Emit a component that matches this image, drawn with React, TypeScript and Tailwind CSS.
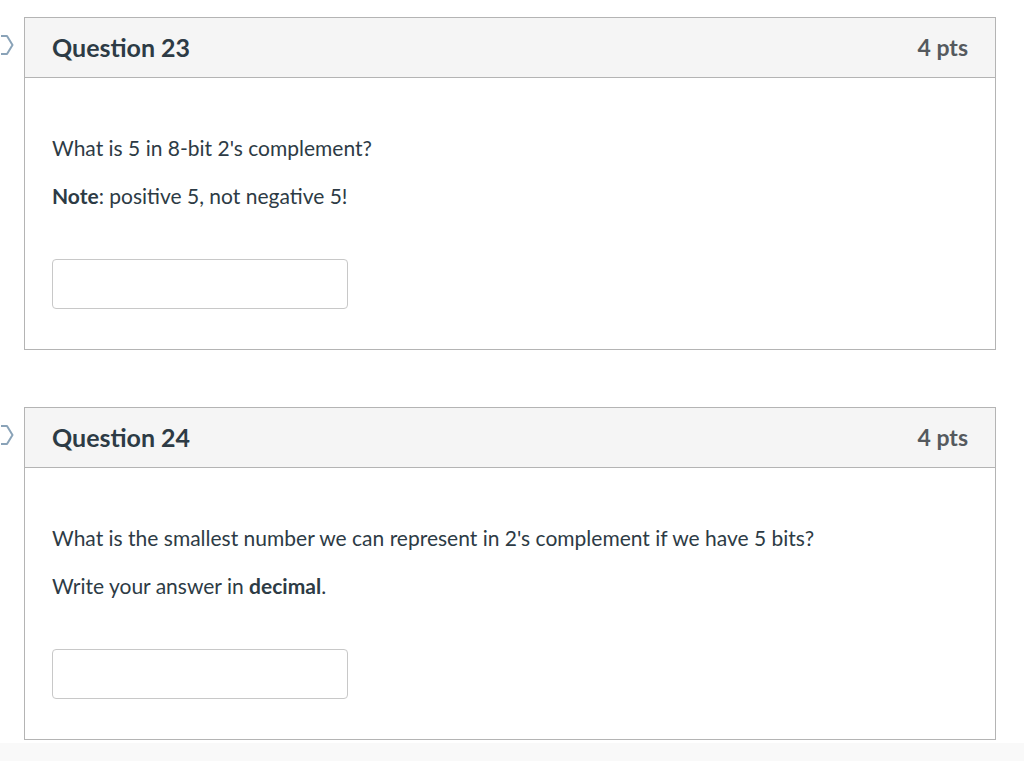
import React from "react";

function Flag() {
  return (
    <svg
      className="absolute left-[-24px] top-[16px]"
      width="14"
      height="22"
      viewBox="0 0 14 22"
    >
      <polyline
        points="-4,2 6,2 11.5,11 6,20 -4,20"
        fill="none"
        stroke="#8aa3b8"
        strokeWidth="2"
        strokeLinejoin="round"
      />
    </svg>
  );
}

function Question({
  num,
  children,
}: {
  num: number;
  children: React.ReactNode;
}) {
  return (
    <div className="relative border border-[#b4b4b4] bg-white">
      <Flag />
      <div className="flex h-[60px] items-center justify-between border-b border-[#b4b4b4] bg-[#f5f5f5] px-[27px]">
        <h2 className="text-[25px] font-bold text-[#2d3b45]">Question {num}</h2>
        <div className="text-[23px] font-bold text-[#555a5e]">4 pts</div>
      </div>
      <div className="px-[27px] pb-[40px] pt-[56px] text-[21px] leading-[28px] text-[#2d3b45]">
        {children}
        <div className="mt-[49px] h-[50px] w-[296px] rounded-[4px] border border-[#c8c8c8] bg-white" />
      </div>
    </div>
  );
}

export default function App() {
  return (
    <div
      className="min-h-[761px] w-full bg-white"
      style={{ fontFamily: "Lato, 'Open Sans', sans-serif" }}
    >
      <div className="flex flex-col gap-[57px] pl-[24px] pr-[28px] pt-[17px]">
        <Question num={23}>
          <p>What is 5 in 8-bit 2's complement?</p>
          <p className="mt-[20px]">
            <strong>Note</strong>: positive 5, not negative 5!
          </p>
        </Question>
        <Question num={24}>
          <p>What is the smallest number we can represent in 2's complement if we have 5 bits?</p>
          <p className="mt-[20px]">
            Write your answer in <strong>decimal</strong>.
          </p>
        </Question>
      </div>
      <div className="mt-[3px] h-[30px] bg-[#f9f9f9]" />
    </div>
  );
}
